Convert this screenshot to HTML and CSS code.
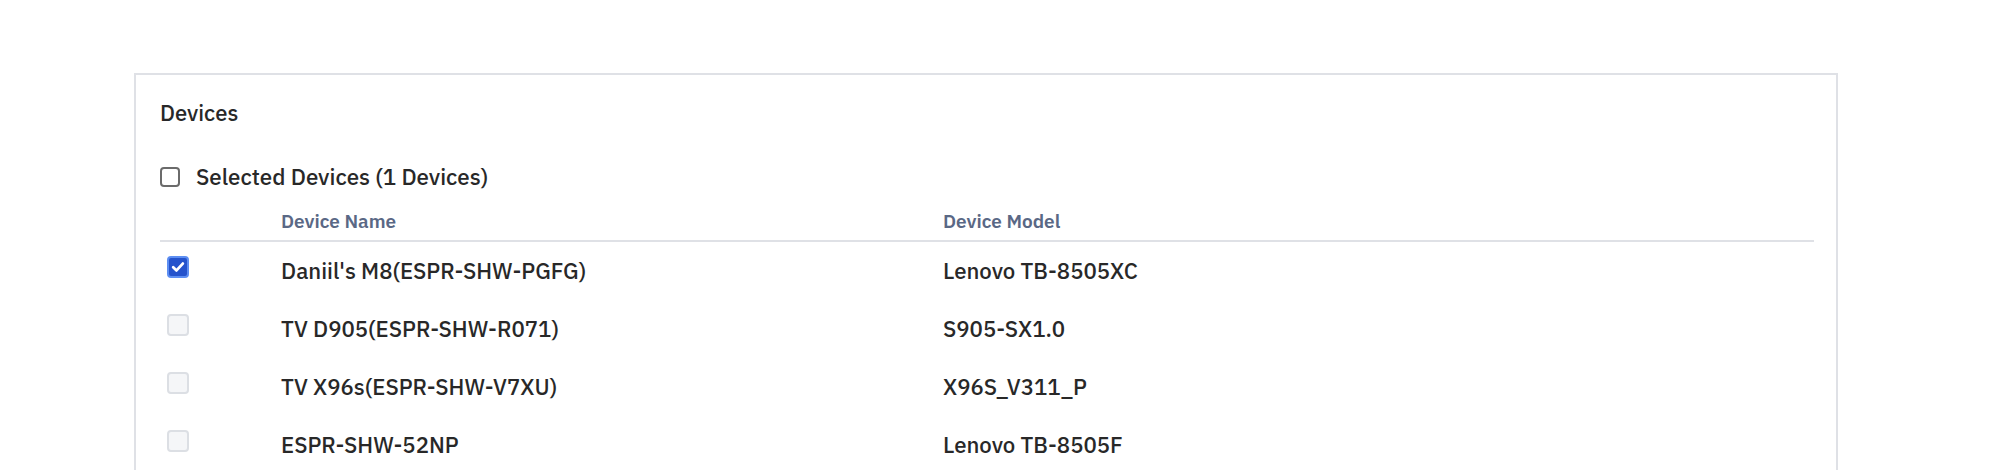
FILE: index.html
```html
<!DOCTYPE html>
<html lang="en">
<head>
<meta charset="utf-8">
<title>Devices</title>
<link rel="stylesheet" href="styles.css">
</head>
<body>
<div class="page">
  <section class="card">
    <h2 class="title">Devices</h2>
    <label class="select-all">
      <span class="cb cb-plain"></span>
      <span>Selected Devices (1 Devices)</span>
    </label>
    <div class="table">
      <div class="row head">
        <div class="cell cell-check"></div>
        <div class="cell">Device Name</div>
        <div class="cell">Device Model</div>
      </div>
      <div class="row">
        <div class="cell cell-check"><span class="cb cb-checked"><svg viewBox="0 0 16 16" width="16" height="16"><path d="M3.2 8.3 L6.5 11.4 L12.8 4.6" fill="none" stroke="#fff" stroke-width="2.8" stroke-linecap="round" stroke-linejoin="round"/></svg></span></div>
        <div class="cell">Daniil's M8(ESPR-SHW-PGFG)</div>
        <div class="cell">Lenovo TB-8505XC</div>
      </div>
      <div class="row">
        <div class="cell cell-check"><span class="cb cb-disabled"></span></div>
        <div class="cell">TV D905(ESPR-SHW-R071)</div>
        <div class="cell">S905-SX1.0</div>
      </div>
      <div class="row">
        <div class="cell cell-check"><span class="cb cb-disabled"></span></div>
        <div class="cell">TV X96s(ESPR-SHW-V7XU)</div>
        <div class="cell">X96S_V311_P</div>
      </div>
      <div class="row">
        <div class="cell cell-check"><span class="cb cb-disabled"></span></div>
        <div class="cell">ESPR-SHW-52NP</div>
        <div class="cell">Lenovo TB-8505F</div>
      </div>
    </div>
  </section>
</div>
</body>
</html>
```
FILE: styles.css
```css
html, body {
  margin: 0;
  padding: 0;
  background: #ffffff;
}

body {
  font-family: "IBM Plex Sans", "Open Sans", "Noto Sans", sans-serif;
  color: #282828;
}

.page {
  padding: 73px 0 0 134px;
}

.card {
  width: 1704px;
  box-sizing: border-box;
  border: 2px solid #dfe1e6;
  border-bottom: none;
  padding: 24px 22px 0 24px;
  min-height: 420px;
}

.title {
  margin: 0;
  font-size: 22px;
  font-weight: 500;
  line-height: 28px;
}

.select-all {
  display: flex;
  align-items: center;
  gap: 16px;
  margin-top: 36px;
  font-size: 22.3px;
  font-weight: 500;
  line-height: 28px;
}

.cb {
  box-sizing: border-box;
  width: 20px;
  height: 20px;
  border-radius: 4px;
  display: inline-flex;
  align-items: center;
  justify-content: center;
  flex: none;
}

.cb-plain {
  border: 2px solid #6b6b6b;
  background: #fff;
}

.cb-checked {
  width: 22px;
  height: 22px;
  background: #2553cc;
  border: 2px solid #5d8ef2;
}

.cb-disabled {
  width: 22px;
  height: 22px;
  background: #f5f6f8;
  border: 2px solid #dcdfe4;
}

.table {
  margin-top: 18px;
}

.row {
  display: grid;
  grid-template-columns: 121px 662px 1fr;
  font-size: 22.2px;
  font-weight: 500;
  line-height: 30px;
  padding: 14px 0;
}

.row.head {
  font-size: 19px;
  font-weight: 600;
  color: #5a6885;
  line-height: 24px;
  padding: 0 0 7px;
  border-bottom: 2px solid #dfe1e6;
}

.cell-check {
  padding-left: 7px;
  display: flex;
  align-items: flex-start;
}
```
